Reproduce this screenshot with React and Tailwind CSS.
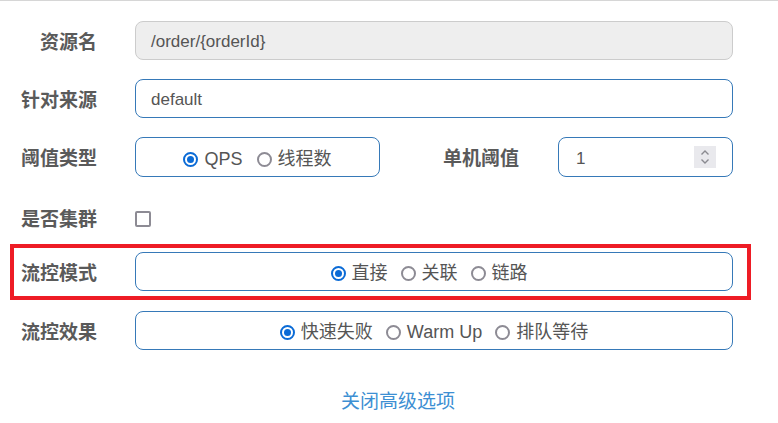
const FONT = { fontFamily: '"Liberation Sans", "Noto Sans CJK SC", sans-serif' };

function Radio({ checked, label }) {
  return (
    <span className="flex items-center pt-[4px]">
      {checked ? (
        <span className="w-[15px] h-[15px] rounded-full border-[2px] border-[#0b6bd6] flex items-center justify-center">
          <span className="w-[7px] h-[7px] rounded-full bg-[#0b6bd6]" />
        </span>
      ) : (
        <span className="w-[15px] h-[15px] rounded-full border-[2px] border-[#8d8b94]" />
      )}
      <span className="ml-[6px] text-[18px] text-[#555]">{label}</span>
    </span>
  );
}

function Label({ children, w = "w-[97px]" }) {
  return (
    <div className={`${w} pt-[5px] text-right text-[19px] font-bold text-[#5a5a5a] shrink-0`}>
      {children}
    </div>
  );
}

export default function App() {
  return (
    <div className="w-[778px] h-[423px] bg-white border-t border-[#d6d6d6]" style={FONT}>
      {/* 资源名 */}
      <div className="flex items-center mt-[20px]">
        <Label>资源名</Label>
        <div className="ml-[38px] w-[598px] h-[39px] rounded-[8px] border border-[#cccccc] bg-[#eeeeee] flex items-center pl-[15px] pt-[3px] text-[17px] text-[#555]">
          /order/{"{orderId}"}
        </div>
      </div>

      {/* 针对来源 */}
      <div className="flex items-center mt-[19px]">
        <Label>针对来源</Label>
        <div className="ml-[38px] w-[598px] h-[39px] rounded-[8px] border border-[#3679b8] flex items-center pl-[15px] pt-[3px] text-[17px] text-[#555]">
          default
        </div>
      </div>

      {/* 阈值类型 / 单机阈值 */}
      <div className="flex items-center mt-[19px]">
        <Label>阈值类型</Label>
        <div className="ml-[38px] w-[245px] h-[40px] rounded-[8px] border border-[#3679b8] flex items-center justify-center gap-[14px]">
          <Radio checked label="QPS" />
          <Radio label="线程数" />
        </div>
        <div className="ml-[63px] pt-[5px] text-[19px] font-bold text-[#5a5a5a]">单机阈值</div>
        <div className="ml-[39px] w-[175px] h-[40px] rounded-[8px] border border-[#3679b8] flex items-center justify-between pl-[17px] pr-[16px] text-[17px] text-[#555]">
          <span className="pt-[3px]">1</span>
          <span className="w-[22px] h-[22px] bg-[#e9e9ed] flex items-center justify-center">
            <svg width="12" height="18" viewBox="0 0 12 18" fill="none" stroke="#8a8a90" strokeWidth="1.4">
              <path d="M2.5 6.5 L6 3 L9.5 6.5" />
              <path d="M2.5 11.5 L6 15 L9.5 11.5" />
            </svg>
          </span>
        </div>
      </div>

      {/* 是否集群 */}
      <div className="flex items-center mt-[21px] h-[39px]">
        <Label>是否集群</Label>
        <span className="ml-[38px] mt-[2px] w-[16px] h-[16px] rounded-[2px] border-[2px] border-[#8d8b94]" />
      </div>

      {/* 流控模式 */}
      <div className="mt-[7px] ml-[10px] w-[741px] border-[4px] border-[#ee1c25] pt-[4px] pb-[5px]">
        <div className="flex items-center">
          <Label w="w-[83px]">流控模式</Label>
          <div className="ml-[38px] w-[598px] h-[39px] rounded-[8px] border border-[#3679b8] flex items-center justify-center gap-[13px] pr-[10px]">
            <Radio checked label="直接" />
            <Radio label="关联" />
            <Radio label="链路" />
          </div>
        </div>
      </div>

      {/* 流控效果 */}
      <div className="flex items-center mt-[11px]">
        <Label>流控效果</Label>
        <div className="ml-[38px] w-[598px] h-[39px] rounded-[8px] border border-[#3679b8] flex items-center justify-center gap-[13px]">
          <Radio checked label="快速失败" />
          <Radio label="Warm Up" />
          <Radio label="排队等待" />
        </div>
      </div>

      <div className="mt-[41px] pl-[341px] text-[19px] leading-[22px] text-[#3d8fd3]">
        关闭高级选项
      </div>
    </div>
  );
}
